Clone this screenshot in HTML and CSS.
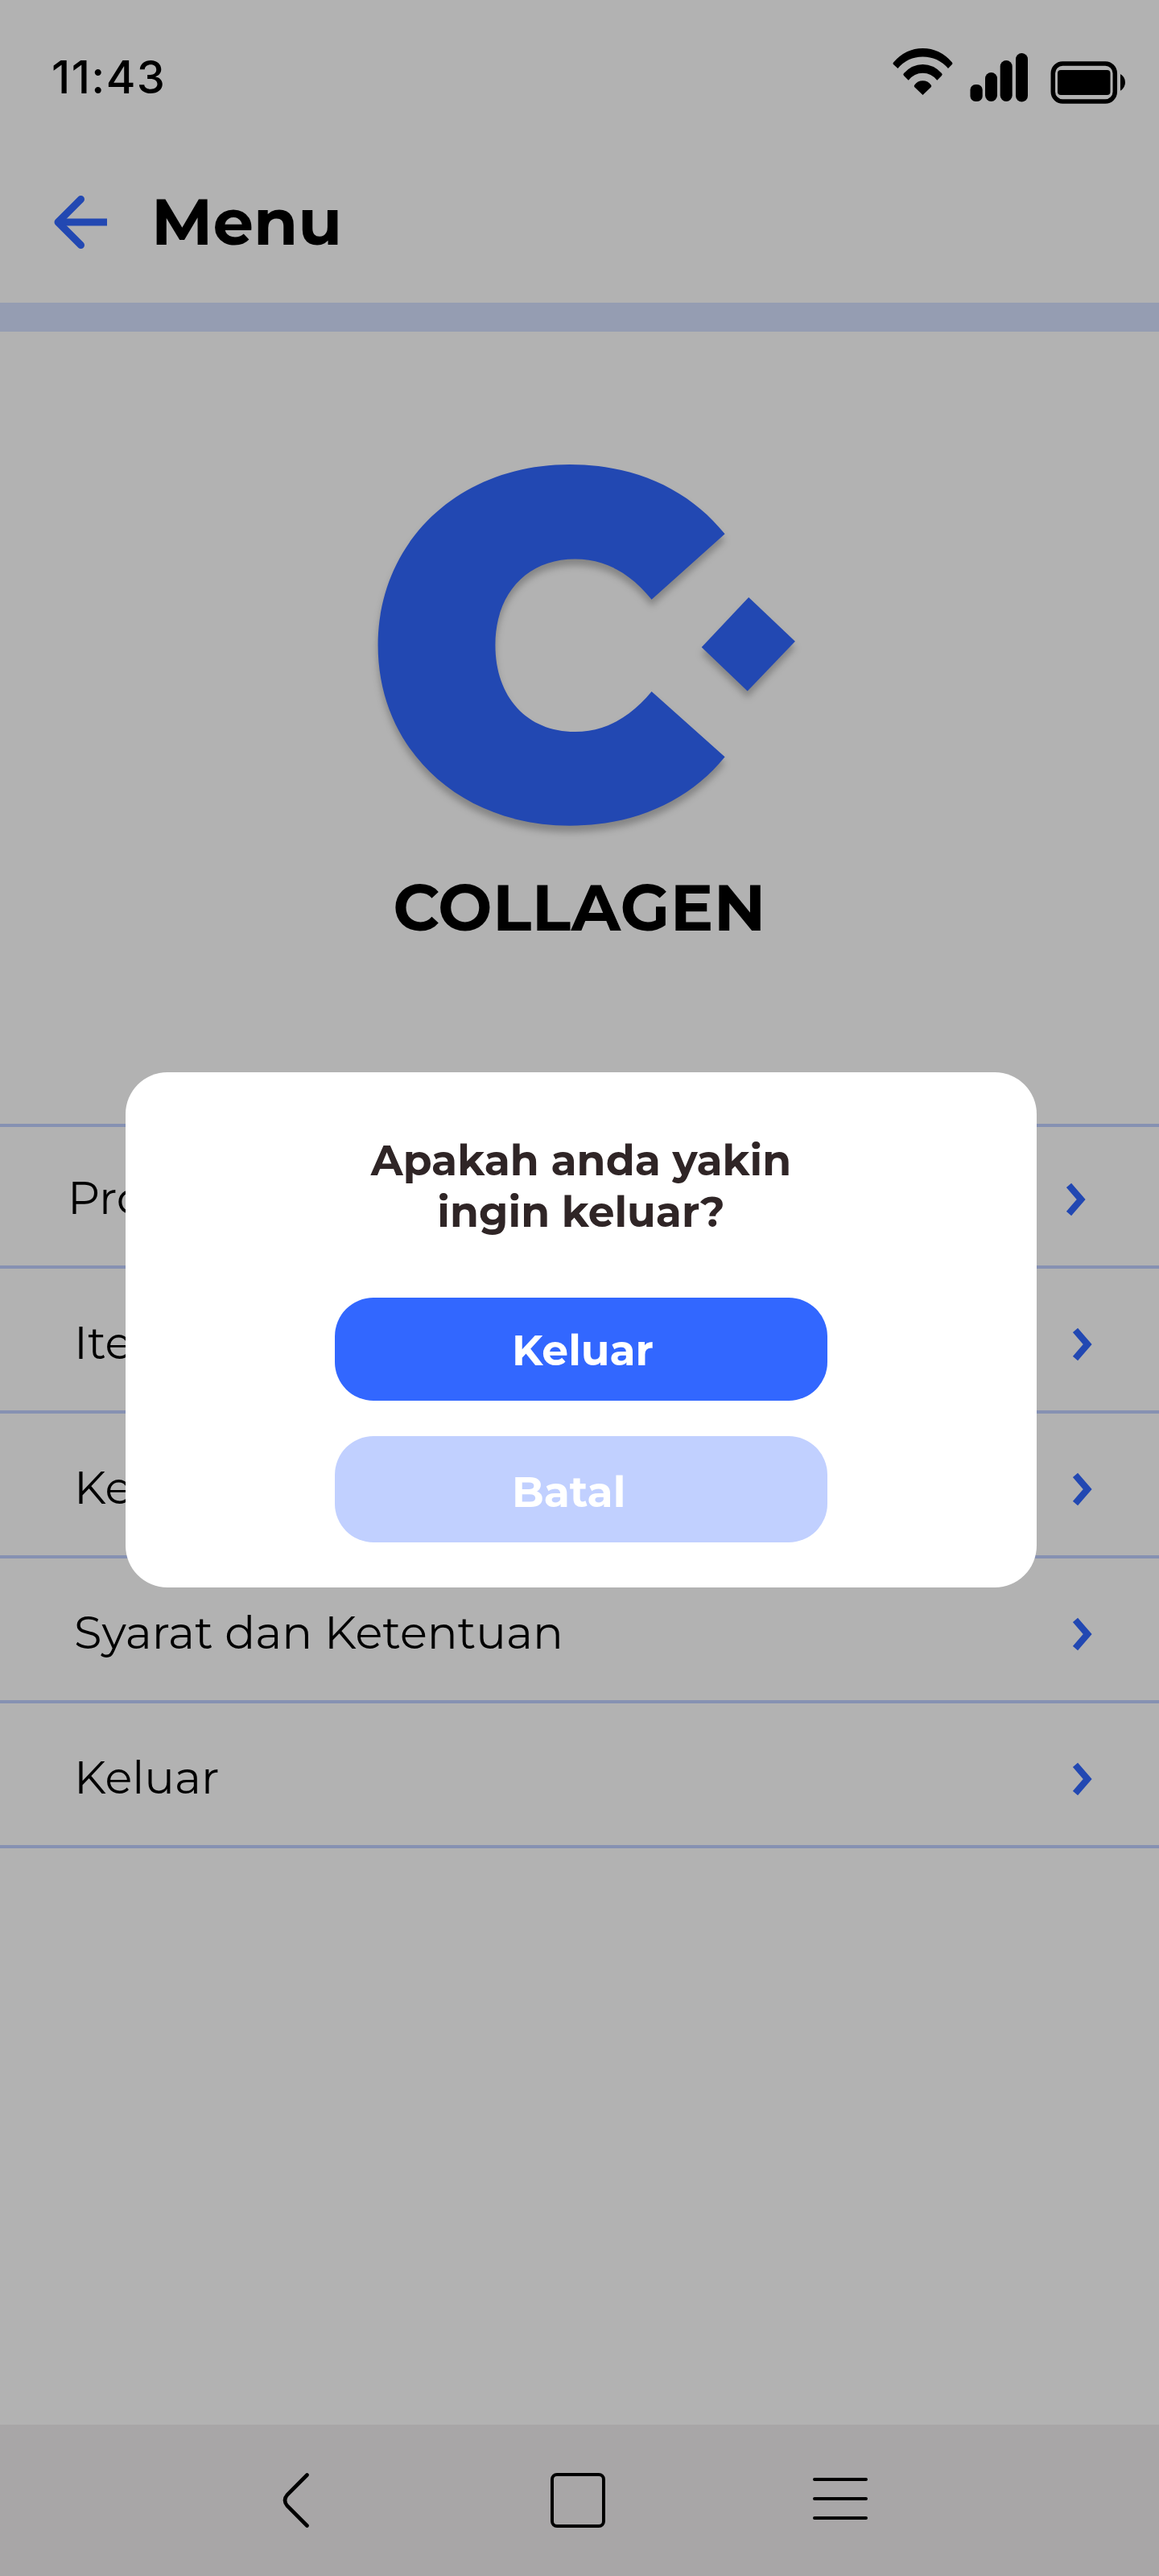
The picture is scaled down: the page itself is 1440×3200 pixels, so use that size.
FILE: index.html
```html
<!DOCTYPE html>
<html lang="id">
<head>
<meta charset="utf-8">
<title>Menu</title>
<link rel="stylesheet" href="styles.css">
</head>
<body>
<div class="screen">
  <header class="status-bar">
    <time class="clock">11:43</time>
    <svg class="status-icons" width="290" height="70" viewBox="1109 59 290 70" aria-hidden="true">
      <path d="M1110.300 77.200Q1125.500 60 1146.500 60T1182.700 77.200Q1184 78.500 1182.900 80L1178 85Q1165 70.600 1146.500 70.600T1115.500 85L1110 80Q1108.900 78.500 1110.300 77.200Z"/>
      <path d="M1123 91Q1133 80 1146.500 80T1170 91Q1171.500 92.500 1170 94L1164.300 99.700Q1157 90.800 1146.500 90.800T1128.700 99.700L1123 94Q1121.500 92.500 1123 91Z"/>
      <path d="M1136.300 105.500Q1140 100.300 1146.500 100.300T1156.700 105.500Q1158 107 1156.700 108.300L1146.500 118 1136.300 108.300Q1135 107 1136.300 105.500Z"/>
      <rect x="1205.500" y="105" width="15.200" height="21" rx="6.500"/>
      <rect x="1224" y="90" width="15" height="36" rx="7.500"/>
      <rect x="1242.700" y="75" width="15" height="51" rx="7.500"/>
      <rect x="1262" y="66" width="15" height="60.500" rx="7.500"/>
      <rect x="1308.300" y="79" width="77" height="47" rx="12" fill="none" stroke="#000" stroke-width="5.500"/>
      <rect x="1314" y="87" width="65.500" height="31" rx="4"/>
      <path d="M1392 92Q1398 95.500 1398 102.300T1392 112.700Z"/>
    </svg>
  </header>
  <div class="title-bar">
    <svg class="back" width="66" height="68" viewBox="0 0 66 68" aria-hidden="true">
      <path d="M33.500 5.500 5 34 33.500 62.500" fill="none" stroke="#3267ff" stroke-width="9" stroke-linecap="round" stroke-linejoin="round"/>
      <path d="M7 34H66" stroke="#3267ff" stroke-width="9"/>
    </svg>
    <h1>Menu</h1>
  </div>
  <section class="brand">
    <svg class="logo" width="540" height="480" viewBox="460 570 540 480" role="img" aria-label="Collagen">
      <path d="M708 577C570 577 469.600 673 469.600 801.500S570 1025.700 708 1025.700C789 1025.700 856 995 900.600 940.300L809.600 859C784 890 753 909.100 714.500 909.100C655 909.100 615.400 866 615.400 801.500S655 694.500 714.500 694.500C753 694.500 784 713 809.600 744.700L900.600 663.300C856 608 789 577 708 577Z"/>
      <path d="M930.200 742 987.900 796.700 928.700 858.600 871.700 803.900Z"/>
    </svg>
    <p class="brand-name">COLLAGEN</p>
  </section>
  <ul class="menu">
    <li class="first"><span>Profil</span><svg class="chevron" width="24" height="42" viewBox="0 0 24 42"><path d="M3 3.500 18.200 21 3 38.500"/></svg></li>
    <li><span>Item</span><svg class="chevron" width="24" height="42" viewBox="0 0 24 42"><path d="M3 3.500 18.200 21 3 38.500"/></svg></li>
    <li><span>Kebijakan</span><svg class="chevron" width="24" height="42" viewBox="0 0 24 42"><path d="M3 3.500 18.200 21 3 38.500"/></svg></li>
    <li><span>Syarat dan Ketentuan</span><svg class="chevron" width="24" height="42" viewBox="0 0 24 42"><path d="M3 3.500 18.200 21 3 38.500"/></svg></li>
    <li><span>Keluar</span><svg class="chevron" width="24" height="42" viewBox="0 0 24 42"><path d="M3 3.500 18.200 21 3 38.500"/></svg></li>
  </ul>
  <nav class="system-nav">
    <svg class="nav-back" width="34" height="70" viewBox="0 0 34 70"><path d="M30.500 3.500 6 28Q0 35 6 42L30.500 66.500"/></svg>
    <svg class="nav-home" width="68" height="68" viewBox="0 0 68 68"><rect x="2" y="2" width="64" height="64" rx="6"/></svg>
    <svg class="nav-recent" width="68" height="52" viewBox="0 0 68 52"><path d="M2 2H66M2 26H66M2 50H66"/></svg>
  </nav>
  <div class="overlay">
    <div class="dialog" role="dialog">
      <p class="question">Apakah anda yakin<br>ingin keluar?</p>
      <button class="button confirm">Keluar</button>
      <button class="button cancel">Batal</button>
    </div>
  </div>
</div>
</body>
</html>
```
FILE: styles.css
```css
* { box-sizing: border-box; margin: 0; padding: 0; }
body { background: #fff; font-family: Montserrat, "Open Sans", sans-serif; color: #000; }
.screen { position: relative; width: 1440px; height: 3200px; display: flex; flex-direction: column; overflow: hidden; }
.status-bar { height: 180px; padding: 59px 41px 0 64px; display: flex; justify-content: space-between; align-items: flex-start; }
.clock { margin-top: 1px; font: 450 56px/72px Inter, sans-serif; letter-spacing: 1.4px; }
.title-bar { height: 232px; padding: 62px 0 0 67px; display: flex; align-items: flex-start; gap: 55px; border-bottom: 36px solid #d6e1ff; }
.title-bar h1 { font-size: 80px; line-height: 67px; font-weight: 700; }
.brand { height: 984px; padding-top: 158px; display: flex; flex-direction: column; align-items: center; }
.logo { margin-left: 20px; fill: #3267ff; filter: drop-shadow(0 8px 4px rgba(0, 0, 0, .25)); }
.brand-name { margin: 29px 0 0; font-size: 80px; line-height: 98px; font-weight: 700; letter-spacing: .4px; }
.menu { list-style: none; border-top: 4px solid #c1d0ff; }
.menu li { height: 180px; padding: 8px 83px 0 92px; display: flex; align-items: center; justify-content: space-between; border-bottom: 4px solid #c1d0ff; font-size: 56px; line-height: 68px; }
.menu .first { height: 176px; padding: 4px 91px 0 84px; }
.chevron { margin-top: 4px; fill: none; stroke: #3267ff; stroke-width: 8.200; }
.system-nav { height: 188px; margin-top: auto; padding: 60px 0 60px 351px; display: flex; align-items: center; background: #f1eeef; fill: none; stroke: #000; stroke-width: 4; stroke-linecap: round; }
.nav-back { stroke-width: 4.600; }
.nav-home { margin-left: 299px; }
.nav-recent { margin: 0 0 4px 258px; }
.overlay { position: absolute; inset: 0; padding-top: 1332px; padding-left: 156px; background: rgba(0, 0, 0, .3); }
.dialog { width: 1132px; height: 640px; padding-top: 78px; border-radius: 52px; background: #fff; display: flex; flex-direction: column; align-items: center; }
.question { height: 202px; font-size: 52px; line-height: 64px; font-weight: 700; text-align: center; color: #2f2526; }
.button { width: 612px; border: 0; border-radius: 48px; padding: 3px 0 0 220px; text-align: left; font: 700 52px/64px Montserrat, "Open Sans", sans-serif; color: #fff; }
.confirm { height: 128px; background: #3267ff; }
.cancel { height: 132px; margin-top: 44px; padding-top: 7px; background: #c1d0ff; }
```
